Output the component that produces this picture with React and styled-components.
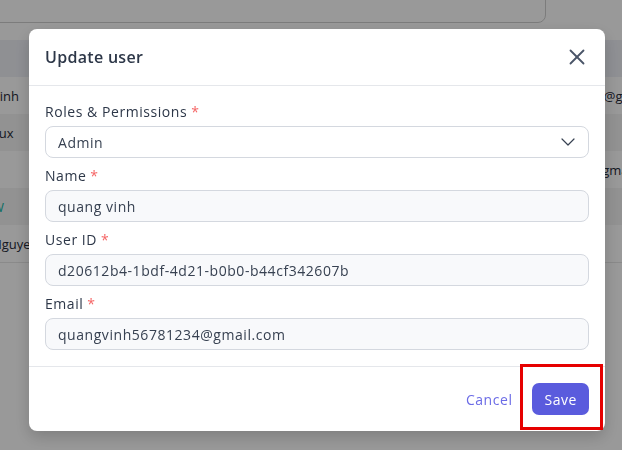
import React from 'react';
import styled, { createGlobalStyle } from 'styled-components';
import { X, ChevronDown } from 'lucide-react';

const GlobalStyle = createGlobalStyle`
  html, body {
    margin: 0;
    padding: 0;
    background: #ffffff;
    font-family: "Open Sans", "Noto Sans", Arial, sans-serif;
    overflow: hidden;
  }
  * { box-sizing: border-box; }
`;

// the users page that sits behind the dialog
const Page = styled.div`
  width: 622px;
  height: 450px;
  overflow: hidden;
  background: #ffffff;
`;

const FilterCard = styled.div`
  width: 556px;
  height: 60px;
  margin-top: -37px;
  margin-left: -10px;
  border: 1px solid #cfcfcf;
  border-radius: 8px;
  background: #ffffff;
`;

const Table = styled.div`
  margin-top: 17px;
  margin-left: -8px;
  width: 800px;
  border-bottom: 1px solid #e6e6e6;
`;

const HeadRow = styled.div`
  height: 37px;
  background: #eef0f6;
`;

const Row = styled.div`
  height: 37px;
  display: grid;
  grid-template-columns: 586px 1fr;
  align-items: center;
  background: ${({ striped }) => (striped ? '#f4f4f4' : '#ffffff')};
  font-size: 13px;
  color: #1f2937;
  white-space: nowrap;
  overflow: hidden;
`;

const Cell = styled.span`
  overflow: hidden;
  color: ${({ accent }) => accent || 'inherit'};
`;

const Backdrop = styled.div`
  position: fixed;
  inset: 0;
  background: rgba(0, 0, 0, 0.4);
  display: flex;
  align-items: flex-start;
  padding: 29px 0 0 29px;
`;

const Modal = styled.div`
  width: 576px;
  background: #ffffff;
  border-radius: 8px;
  box-shadow: 0 6px 16px rgba(0, 0, 0, 0.18);
  letter-spacing: 0.55px;
`;

const Header = styled.div`
  height: 57px;
  display: flex;
  align-items: center;
  justify-content: space-between;
  padding: 0 15px 0 16px;
  border-bottom: 1px solid #e5e7eb;
`;

const Title = styled.h2`
  margin: 0;
  font-size: 16px;
  font-weight: 600;
  letter-spacing: 0.3px;
  color: #2d3748;
`;

const CloseButton = styled.button`
  border: none;
  background: none;
  padding: 0;
  display: flex;
  color: #4a5568;
  cursor: pointer;
`;

const Body = styled.div`
  padding: 16px;
  display: flex;
  flex-direction: column;
  gap: 8px;
  border-bottom: 1px solid #e5e7eb;
`;

const Field = styled.div`
  display: flex;
  flex-direction: column;
  gap: 4px;
`;

const Label = styled.label`
  font-size: 14px;
  line-height: 20px;
  color: #2d3748;
`;

const Required = styled.span`
  color: #f56565;
  margin-left: 4px;
`;

const InputBox = styled.div`
  height: 32px;
  display: flex;
  align-items: center;
  justify-content: space-between;
  padding: 0 ${({ select }) => (select ? '8px' : '12px')} 0 12px;
  border: 1px solid #d4d8df;
  border-radius: 8px;
  background: ${({ select }) => (select ? '#ffffff' : '#f8f9fb')};
  font-size: 14px;
  color: #374151;
`;

const Footer = styled.div`
  padding: 16px;
  display: flex;
  justify-content: flex-end;
  align-items: center;
  gap: 20px;
`;

const CancelButton = styled.button`
  border: none;
  background: none;
  padding: 0;
  font-family: inherit;
  letter-spacing: inherit;
  font-size: 14px;
  color: #6b6be6;
  cursor: pointer;
`;

// red frame drawn round the save button
const Highlight = styled.div`
  border: 3px solid #e60000;
  padding: 16px 11px 12px 9px;
  margin: -19px -14px -15px -12px;
`;

const SaveButton = styled.button`
  height: 32px;
  padding: 0 12px;
  border: none;
  border-radius: 7px;
  background: #5a5bdd;
  color: #ffffff;
  font-family: inherit;
  letter-spacing: inherit;
  font-size: 14px;
  cursor: pointer;
`;

const rows = [
  { name: 'Vinh', mail: 'vinh@gmail.com' },
  { name: 'Lux', mail: '' },
  { name: '', mail: 'tu@gmail.com' },
  { name: 'W', mail: '', accent: '#14b8a6' },
  { name: 'Nguyen', mail: '' },
];

const fields = [
  { label: 'Name', value: 'quang vinh' },
  { label: 'User ID', value: 'd20612b4-1bdf-4d21-b0b0-b44cf342607b' },
  { label: 'Email', value: 'quangvinh56781234@gmail.com' },
];

export default function App() {
  return (
    <>
      <GlobalStyle />
      <Page>
        <FilterCard />
        <Table>
          <HeadRow />
          {rows.map((r, i) => (
            <Row key={i} striped={i % 2 === 1}>
              <Cell accent={r.accent}>{r.name}</Cell>
              <Cell>{r.mail}</Cell>
            </Row>
          ))}
        </Table>
      </Page>

      <Backdrop>
        <Modal>
          <Header>
            <Title>Update user</Title>
            <CloseButton aria-label="Close">
              <X size={26} strokeWidth={1.7} />
            </CloseButton>
          </Header>
          <Body>
            <Field>
              <Label>Roles &amp; Permissions<Required>*</Required></Label>
              <InputBox select>
                <span>Admin</span>
                <ChevronDown size={24} strokeWidth={1.2} />
              </InputBox>
            </Field>
            {fields.map((f) => (
              <Field key={f.label}>
                <Label>{f.label}<Required>*</Required></Label>
                <InputBox>{f.value}</InputBox>
              </Field>
            ))}
          </Body>
          <Footer>
            <CancelButton>Cancel</CancelButton>
            <Highlight>
              <SaveButton>Save</SaveButton>
            </Highlight>
          </Footer>
        </Modal>
      </Backdrop>
    </>
  );
}
